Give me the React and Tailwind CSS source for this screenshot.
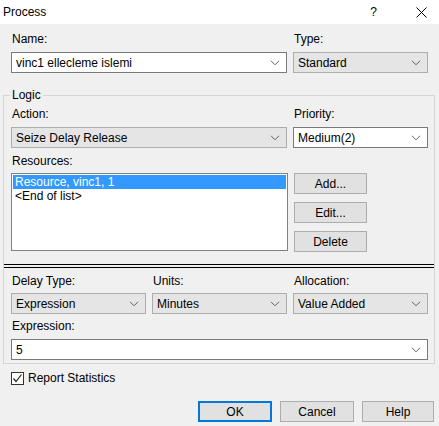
import React from "react";

function Chevron() {
  return (
    <svg width="10" height="6" viewBox="0 0 10 6" className="shrink-0">
      <path d="M1 0.8 L5 4.8 L9 0.8" fill="none" stroke="#606060" strokeWidth="1" />
    </svg>
  );
}

function Combo({ value, white, w }) {
  return (
    <div
      className={
        "h-[21px] flex items-center justify-between pl-[4px] pr-[6px] border " +
        (white ? "bg-white border-[#7a7a7a]" : "bg-[#e5e5e5] border-[#adadad]") +
        " " +
        w
      }
    >
      <span className="leading-none">{value}</span>
      <Chevron />
    </div>
  );
}

function Btn({ children, w, primary }) {
  return (
    <div
      className={
        "h-[21px] flex items-center justify-center bg-[#e1e1e1] " +
        (primary ? "border-2 border-[#0078d7]" : "border border-[#adadad]") +
        " " +
        w
      }
    >
      {children}
    </div>
  );
}

function Label({ children, w }) {
  return <div className={"h-[14px] leading-[14px] pl-[1px] " + (w || "")}>{children}</div>;
}

export default function App() {
  return (
    <div className="w-[439px] h-[426px] bg-[#f0f0f0] text-[12px] text-black font-['Liberation_Sans',sans-serif] overflow-hidden">
      {/* title bar */}
      <div className="h-[24px] bg-white flex items-center pl-[3px]">
        <span className="text-[12px]">Process</span>
        <span className="ml-auto mr-[39px]">?</span>
        <svg width="11" height="11" viewBox="0 0 11 11" className="mr-[12px]">
          <path d="M0.5 0.5 L10.5 10.5 M10.5 0.5 L0.5 10.5" stroke="#000" strokeWidth="1" />
        </svg>
      </div>

      {/* name / type */}
      <div className="pl-[11px] pt-[8px] flex gap-[6px]">
        <div className="flex flex-col gap-[6px]">
          <Label>Name:</Label>
          <Combo value="vinc1 ellecleme islemi" white w="w-[276px]" />
        </div>
        <div className="flex flex-col gap-[6px]">
          <Label>Type:</Label>
          <Combo value="Standard" w="w-[135px]" />
        </div>
      </div>

      {/* Logic group */}
      <div className="relative ml-[3px] mt-[22px] w-[432px] pb-[3px] border border-[#d5d5d5]">
        <div className="absolute -top-[8px] left-[6px] px-[2px] bg-[#f0f0f0] leading-[14px]">Logic</div>
        <div className="pl-[7px] pt-[11px] flex gap-[6px]">
          <div className="flex flex-col gap-[6px]">
            <Label>Action:</Label>
            <Combo value="Seize Delay Release" w="w-[276px]" />
          </div>
          <div className="flex flex-col gap-[6px]">
            <Label>Priority:</Label>
            <Combo value="Medium(2)" white w="w-[135px]" />
          </div>
        </div>
        <div className="pl-[7px] pt-[6px]">
          <Label>Resources:</Label>
        </div>
        <div className="pl-[7px] pt-[5px] flex">
          <div className="w-[277px] h-[78px] bg-white border border-[#828282] p-[1px]">
            <div className="h-[14px] leading-[14px] bg-[#3399ff] text-white pl-[2px]">Resource, vinc1, 1</div>
            <div className="h-[14px] leading-[14px] pl-[2px]">&lt;End of list&gt;</div>
          </div>
          <div className="ml-[6px] flex flex-col gap-[8px]">
            <Btn w="w-[73px]">Add...</Btn>
            <Btn w="w-[73px]">Edit...</Btn>
            <Btn w="w-[73px]">Delete</Btn>
          </div>
        </div>

        {/* separator */}
        <div className="mt-[12px] h-[4px] border-y border-black" />

        <div className="pl-[7px] pt-[6px] flex gap-[6px]">
          <div className="flex flex-col gap-[5px]">
            <Label>Delay Type:</Label>
            <Combo value="Expression" w="w-[135px]" />
          </div>
          <div className="flex flex-col gap-[5px]">
            <Label>Units:</Label>
            <Combo value="Minutes" w="w-[135px]" />
          </div>
          <div className="flex flex-col gap-[5px]">
            <Label>Allocation:</Label>
            <Combo value="Value Added" w="w-[135px]" />
          </div>
        </div>
        <div className="pl-[7px] pt-[5px] flex flex-col gap-[6px]">
          <Label>Expression:</Label>
          <Combo value="5" white w="w-[417px]" />
        </div>
      </div>

      {/* report statistics */}
      <div className="pl-[11px] pt-[7px] flex items-center gap-[4px]">
        <div className="w-[13px] h-[13px] bg-white border border-[#333] flex items-center justify-center">
          <svg width="11" height="11" viewBox="0 0 11 11">
            <path d="M1.5 5.5 L4 8.5 L9.5 1.5" fill="none" stroke="#222" strokeWidth="1.2" />
          </svg>
        </div>
        <span className="leading-[14px]">Report Statistics</span>
      </div>

      {/* bottom buttons */}
      <div className="pt-[16px] pl-[198px] flex gap-[8px]">
        <Btn w="w-[74px]" primary>OK</Btn>
        <Btn w="w-[74px]">Cancel</Btn>
        <Btn w="w-[72px]">Help</Btn>
      </div>
    </div>
  );
}
